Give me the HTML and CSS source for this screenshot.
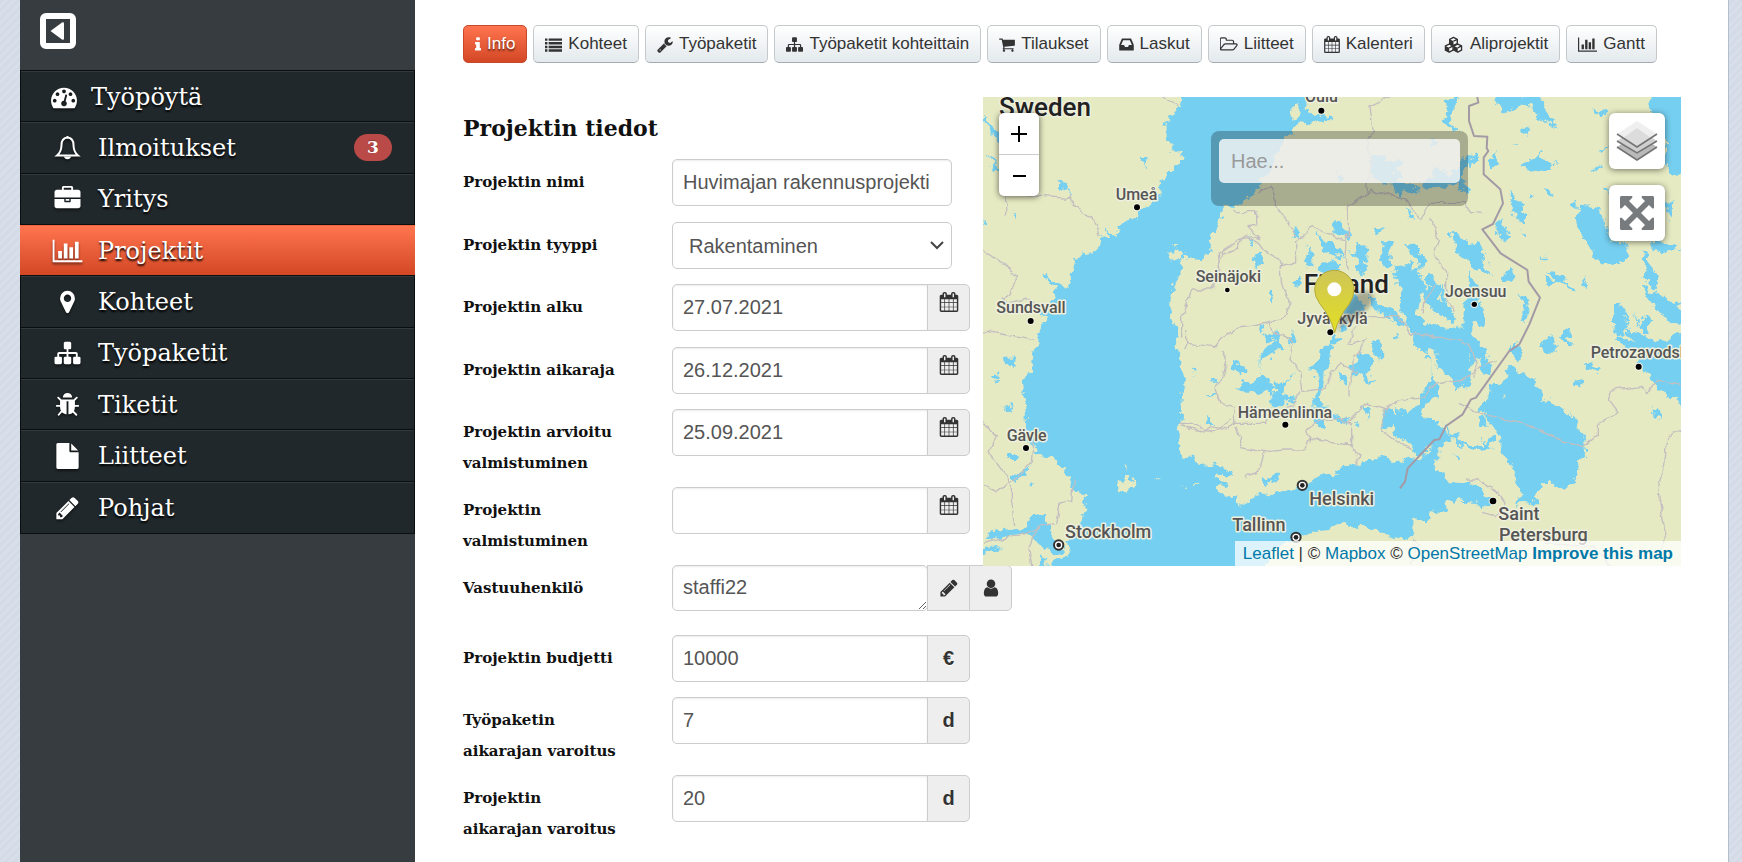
FILE: index.html
```html
<!DOCTYPE html>
<html lang="fi">
<head>
<meta charset="utf-8">
<title>Projektin tiedot</title>
<link rel="stylesheet" href="styles.css">
</head>
<body>
<svg class="sprite" aria-hidden="true">
  <symbol id="i-info" viewBox="576 0 640 1792"><path d="M1216 1344v128q0 26-19 45t-45 19h-512q-26 0-45-19t-19-45v-128q0-26 19-45t45-19h64v-384h-64q-26 0-45-19t-19-45v-128q0-26 19-45t45-19h384q26 0 45 19t19 45v576h64q26 0 45 19t19 45zm-128-1152v192q0 26-19 45t-45 19h-256q-26 0-45-19t-19-45v-192q0-26 19-45t45-19h256q26 0 45 19t19 45z"/></symbol>
  <symbol id="i-list" viewBox="0 0 1792 1792"><path d="M0 256h256v256H0zM384 256h1408v256H384zM0 640h256v256H0zM384 640h1408v256H384zM0 1024h256v256H0zM384 1024h1408v256H384zM0 1408h256v256H0zM384 1408h1408v256H384z"/></symbol>
  <symbol id="i-wrench" viewBox="64 0 1664 1792"><path d="M448 1472q0-26-19-45t-45-19-45 19-19 45 19 45 45 19 45-19 19-45zm644-420l-682 682q-37 37-90 37-52 0-91-37l-106-108q-38-36-38-90 0-53 38-91l681-681q39 98 114.500 173.500t173.500 114.500zm634-435q0 39-23 106-47 134-164.500 217.500t-258.500 83.500q-185 0-316.500-131.500t-131.500-316.500 131.500-316.500 316.500-131.500q58 0 121.500 16.500t107.500 46.500q16 11 16 28t-16 28l-293 169v224l193 107q5-3 79-48.500t135.500-81 70.500-35.500q15 0 23.500 10t8.500 25z"/></symbol>
  <symbol id="i-sitemap" viewBox="0 0 1792 1792"><path d="M1792 1248v320q0 40-28 68t-68 28h-320q-40 0-68-28t-28-68v-320q0-40 28-68t68-28h96v-192h-512v192h96q40 0 68 28t28 68v320q0 40-28 68t-68 28h-320q-40 0-68-28t-28-68v-320q0-40 28-68t68-28h96v-192h-512v192h96q40 0 68 28t28 68v320q0 40-28 68t-68 28h-320q-40 0-68-28t-28-68v-320q0-40 28-68t68-28h96v-192q0-52 38-90t90-38h512v-192h-96q-40 0-68-28t-28-68v-320q0-40 28-68t68-28h320q40 0 68 28t28 68v320q0 40-28 68t-68 28h-96v192h512q52 0 90 38t38 90v192h96q40 0 68 28t28 68z"/></symbol>
  <symbol id="i-cart" viewBox="64 0 1664 1792"><path d="M704 1536q0 52-38 90t-90 38-90-38-38-90 38-90 90-38 90 38 38 90zm896 0q0 52-38 90t-90 38-90-38-38-90 38-90 90-38 90 38 38 90zm128-1088v512q0 24-16.500 42.500t-40.500 21.500l-1044 122q13 60 13 70 0 16-24 64h920q26 0 45 19t19 45-19 45-45 19h-1024q-26 0-45-19t-19-45q0-11 8-31.500t16-36 21.500-40 15.500-29.500l-177-823h-204q-26 0-45-19t-19-45 19-45 45-19h256q16 0 28.500 6.500t19.500 15.500 13 24.500 8 26 5.500 29.500 4.500 26h1201q26 0 45 19t19 45z"/></symbol>
  <symbol id="i-inbox" viewBox="128 0 1536 1792"><path d="M1151 960h316q-1-3-2.500-8t-2.500-8l-212-496h-708l-212 496q-1 2-2.500 8t-2.500 8h316l95 192h320zm513 30v482q0 26-19 45t-45 19h-1408q-26 0-45-19t-19-45v-482q0-62 25-123l238-552q10-25 36.500-42t52.500-17h832q26 0 52.500 17t36.500 42l238 552q25 61 25 123z"/></symbol>
  <symbol id="i-folder" viewBox="0 0 1856 1792"><path d="M1717 931q0-35-53-35h-1088q-40 0-85.500 21.500t-71.500 52.500l-294 363q-18 24-18 40 0 35 53 35h1088q40 0 86-22t71-53l294-363q18-22 18-39zm-1141-163h768v-160q0-40-28-68t-68-28h-576q-40 0-68-28t-28-68v-64q0-40-28-68t-68-28h-320q-40 0-68 28t-28 68v853l256-315q44-53 116-87.500t140-34.500zm1269 163q0 62-46 120l-295 363q-43 53-116 87.500t-140 34.500h-1088q-92 0-158-66t-66-158v-960q0-92 66-158t158-66h320q92 0 158 66t66 158v32h544q92 0 158 66t66 158v160h192q54 0 99 24.500t67 70.500q15 32 15 68z"/></symbol>
  <symbol id="i-calendar" viewBox="64 0 1664 1792"><path d="M192 1664h288v-288h-288v288zm352 0h320v-288h-320v288zm-352-352h288v-320h-288v320zm352 0h320v-320h-320v320zm-352-384h288v-288h-288v288zm736 736h320v-288h-320v288zm-384-736h320v-288h-320v288zm768 736h288v-288h-288v288zm-384-352h320v-320h-320v320zm-352-864v-288q0-13-9.500-22.500t-22.500-9.500h-64q-13 0-22.500 9.500t-9.500 22.500v288q0 13 9.500 22.500t22.500 9.500h64q13 0 22.500-9.500t9.500-22.500zm736 864h288v-320h-288v320zm-384-384h320v-288h-320v288zm384 0h288v-288h-288v288zm32-480v-288q0-13-9.500-22.500t-22.500-9.500h-64q-13 0-22.500 9.500t-9.500 22.500v288q0 13 9.500 22.500t22.500 9.500h64q13 0 22.500-9.500t9.500-22.500zm384-64v1280q0 52-38 90t-90 38h-1408q-52 0-90-38t-38-90v-1280q0-52 38-90t90-38h128v-96q0-66 47-113t113-47h64q66 0 113 47t47 113v96h384v-96q0-66 47-113t113-47h64q66 0 113 47t47 113v96h128q52 0 90 38t38 90z"/></symbol>
  <symbol id="i-cubes" viewBox="0 0 40 36"><g fill="#fff" stroke="currentColor" stroke-width="3" stroke-linejoin="round"><path d="M20 3l8 4v9l-8 4-8-4V7z"/><path d="M11 17l8 4v9l-8 4-8-4v-9z"/><path d="M29 17l8 4v9l-8 4-8-4v-9z"/></g><path d="M12 7l8 4v9l-8-4zM3 21l8 4v9l-8-4zM21 21l8 4v9l-8-4z"/><path d="M20 11l8-4M11 25l8-4M29 25l8-4" stroke="currentColor" stroke-width="3" fill="none"/></symbol>
  <symbol id="i-chart" viewBox="0 0 2048 1792"><path d="M640 896v512h-256v-512h256zm384-512v1024h-256v-1024h256zm1024 1152v128h-2048v-1536h128v1408h1920zm-640-896v768h-256v-768h256zm384-384v1152h-256v-1152h256z"/></symbol>
  <symbol id="i-gauge" viewBox="0 0 1792 1792"><path d="M384 1152q0-53-37.500-90.500t-90.500-37.500-90.500 37.500-37.500 90.500 37.500 90.500 90.500 37.500 90.500-37.500 37.500-90.500zm192-448q0-53-37.500-90.500t-90.500-37.500-90.500 37.500-37.500 90.500 37.500 90.500 90.500 37.500 90.500-37.500 37.500-90.500zm428 481l101-382q6-26-7.500-48.500t-38.500-29.500-48 6.500-30 39.500l-101 382q-60 5-107 43.500t-63 98.500q-20 77 20 146t117 89 146-20 89-117q16-60-6-117t-72-91zm660-33q0-53-37.500-90.500t-90.500-37.500-90.500 37.500-37.500 90.500 37.500 90.500 90.500 37.500 90.500-37.500 37.500-90.500zm-640-640q0-53-37.500-90.500t-90.500-37.500-90.500 37.500-37.500 90.500 37.500 90.500 90.500 37.500 90.500-37.500 37.500-90.500zm448 192q0-53-37.500-90.500t-90.500-37.500-90.500 37.500-37.500 90.500 37.500 90.500 90.500 37.500 90.500-37.500 37.500-90.500zm320 448q0 261-141 483-19 29-54 29h-1402q-35 0-54-29-141-221-141-483 0-182 71-348t191-286 286-191 348-71 348 71 286 191 191 286 71 348z"/></symbol>
  <symbol id="i-bell" viewBox="0 0 26 26"><path d="M13 2.500C8.500 3 7 6.500 7 10c0 5-1.500 8-4.500 10.500h21C20.500 18 19 15 19 10c0-3.500-1.500-7-6-7.500z" fill="none" stroke="currentColor" stroke-width="2"/><path d="M11.500 2.500a1.500 1.500 0 013 0zM9.500 21.500a3.600 3.600 0 007 0z"/></symbol>
  <symbol id="i-briefcase" viewBox="0 0 1792 1792"><path d="M640 256h512v-128h-512v128zm1152 640v480q0 66-47 113t-113 47h-1472q-66 0-113-47t-47-113v-480h672v160q0 26 19 45t45 19h320q26 0 45-19t19-45v-160h672zm-768 0v128h-256v-128h256zm768-480v384h-1792v-384q0-66 47-113t113-47h352v-160q0-40 28-68t68-28h576q40 0 68 28t28 68v160h352q66 0 113 47t47 113z"/></symbol>
  <symbol id="i-marker" viewBox="0 0 1792 1792"><path d="M1152 640q0-106-75-181t-181-75-181 75-75 181 75 181 181 75 181-75 75-181zm256 0q0 109-33 179l-364 774q-16 33-47.500 52t-67.500 19-67.500-19-46.500-52l-365-774q-33-70-33-179 0-212 150-362t362-150 362 150 150 362z"/></symbol>
  <symbol id="i-bug" viewBox="0 0 1792 1792"><path d="M1696 960q0 26-19 45t-45 19h-224q0 171-67 290l208 209q19 19 19 45t-19 45q-18 19-45 19t-45-19l-198-197q-5 5-15 13t-42 28.500-65 36.500-82 29-97 13v-896h-128v896q-51 0-101.500-13.500t-87-33-66-39-43.500-32.500l-15-14-183 207q-20 21-48 21-24 0-43-16-19-18-20.500-44.500t15.500-46.500l202-227q-58-114-58-274h-224q-26 0-45-19t-19-45 19-45 45-19h224v-294l-173-173q-19-19-19-45t19-45 45-19 45 19l173 173h844l173-173q19-19 45-19t45 19 19 45-19 45l-173 173v294h224q26 0 45 19t19 45zm-480-576h-640q0-133 93.500-226.500t226.500-93.500 226.500 93.500 93.500 226.500z"/></symbol>
  <symbol id="i-file" viewBox="0 0 1792 1792"><path d="M1152 512v-472q22 14 36 28l408 408q14 14 28 36h-472zm-128 32q0 40 28 68t68 28h544v1056q0 40-28 68t-68 28h-1344q-40 0-68-28t-28-68v-1600q0-40 28-68t68-28h800v544z"/></symbol>
  <symbol id="i-pencil" viewBox="0 0 1792 1792"><path d="M491 1536l91-91-235-235-91 91v107h128v128h107zm523-928q0-22-22-22-10 0-17 7l-542 542q-7 7-7 17 0 22 22 22 10 0 17-7l542-542q7-7 7-17zm-54-192l416 416-832 832h-416v-416zm683 96q0 53-37 90l-166 166-416-416 166-165q36-38 90-38 53 0 91 38l235 234q37 39 37 91z"/></symbol>
  <symbol id="i-user" viewBox="0 0 1792 1792"><path d="M1536 1399q0 109-62.500 187t-150.500 78h-854q-88 0-150.500-78t-62.500-187q0-85 8.500-160.500t31.500-152 58.500-131 94-89 134.500-34.500q131 128 313 128t313-128q76 0 134.500 34.500t94 89 58.500 131 31.500 152 8.500 160.500zm-256-887q0 159-112.500 271.500t-271.500 112.500-271.500-112.500-112.500-271.500 112.500-271.500 271.500-112.500 271.500 112.500 112.500 271.500z"/></symbol>
</svg>

<div class="page">
  <aside class="sidebar">
    <div class="sidebar-top">
      <button class="collapse" type="button" aria-label="Piilota valikko"><svg viewBox="0 0 36 36"><rect x="3" y="3" width="30" height="30" rx="3" fill="none" stroke="currentColor" stroke-width="6"/><path d="M10.500 18L22 9.500q2-1 2 1v15q0 2-2 1z"/></svg></button>
    </div>
    <nav class="menu">
      <a class="menu-item menu-first" href="#"><svg class="menu-icon"><use href="#i-gauge"/></svg><span>Työpöytä</span></a>
      <a class="menu-item" href="#"><svg class="menu-icon"><use href="#i-bell"/></svg><span>Ilmoitukset</span><span class="badge">3</span></a>
      <a class="menu-item" href="#"><svg class="menu-icon"><use href="#i-briefcase"/></svg><span>Yritys</span></a>
      <a class="menu-item active" href="#"><svg class="menu-icon"><use href="#i-chart"/></svg><span>Projektit</span></a>
      <a class="menu-item" href="#"><svg class="menu-icon"><use href="#i-marker"/></svg><span>Kohteet</span></a>
      <a class="menu-item" href="#"><svg class="menu-icon"><use href="#i-sitemap"/></svg><span>Työpaketit</span></a>
      <a class="menu-item" href="#"><svg class="menu-icon"><use href="#i-bug"/></svg><span>Tiketit</span></a>
      <a class="menu-item" href="#"><svg class="menu-icon"><use href="#i-file"/></svg><span>Liitteet</span></a>
      <a class="menu-item" href="#"><svg class="menu-icon"><use href="#i-pencil"/></svg><span>Pohjat</span></a>
    </nav>
  </aside>

  <main class="content">
    <nav class="tabs">
      <a class="tab current" href="#"><svg class="tab-icon w6"><use href="#i-info"/></svg>Info</a>
      <a class="tab" href="#"><svg class="tab-icon w17"><use href="#i-list"/></svg>Kohteet</a>
      <a class="tab" href="#"><svg class="tab-icon w16"><use href="#i-wrench"/></svg>Työpaketit</a>
      <a class="tab" href="#"><svg class="tab-icon w17"><use href="#i-sitemap"/></svg>Työpaketit kohteittain</a>
      <a class="tab" href="#"><svg class="tab-icon w16"><use href="#i-cart"/></svg>Tilaukset</a>
      <a class="tab" href="#"><svg class="tab-icon w15"><use href="#i-inbox"/></svg>Laskut</a>
      <a class="tab" href="#"><svg class="tab-icon w18"><use href="#i-folder"/></svg>Liitteet</a>
      <a class="tab" href="#"><svg class="tab-icon w16"><use href="#i-calendar"/></svg>Kalenteri</a>
      <a class="tab" href="#"><svg class="tab-icon w21"><use href="#i-cubes"/></svg>Aliprojektit</a>
      <a class="tab" href="#"><svg class="tab-icon w19"><use href="#i-chart"/></svg>Gantt</a>
    </nav>

    <div class="columns">
      <form class="details">
        <h1 class="title">Projektin tiedot</h1>
        <div class="row spaced"><label class="label" for="nimi">Projektin nimi</label><div class="control"><input class="field wide" id="nimi" type="text" value="Huvimajan rakennusprojekti"></div></div>
        <div class="row"><label class="label" for="tyyppi">Projektin tyyppi</label><div class="control"><span class="select-wrap"><select class="field wide select" id="tyyppi"><option>Rakentaminen</option></select><svg class="chevron" viewBox="0 0 14 9"><path d="M1 1l6 6 6-6" fill="none" stroke="currentColor" stroke-width="2"/></svg></span></div></div>
        <div class="row spaced"><label class="label" for="alku">Projektin alku</label><div class="control"><input class="field" id="alku" type="text" value="27.07.2021"><button class="addon date" type="button" aria-label="Valitse alkupäivä"><svg class="addon-icon"><use href="#i-calendar"/></svg></button></div></div>
        <div class="row"><label class="label" for="aikaraja">Projektin aikaraja</label><div class="control"><input class="field" id="aikaraja" type="text" value="26.12.2021"><button class="addon date" type="button" aria-label="Valitse aikaraja"><svg class="addon-icon"><use href="#i-calendar"/></svg></button></div></div>
        <div class="row"><label class="label" for="arvio">Projektin arvioitu valmistuminen</label><div class="control"><input class="field" id="arvio" type="text" value="25.09.2021"><button class="addon date" type="button" aria-label="Valitse arvioitu valmistuminen"><svg class="addon-icon"><use href="#i-calendar"/></svg></button></div></div>
        <div class="row"><label class="label" for="valmis">Projektin valmistuminen</label><div class="control"><input class="field" id="valmis" type="text"><button class="addon date" type="button" aria-label="Valitse valmistuminen"><svg class="addon-icon"><use href="#i-calendar"/></svg></button></div></div>
        <div class="row staff"><label class="label" for="vastuu">Vastuuhenkilö</label><div class="control"><textarea class="field area" id="vastuu" rows="1">staffi22</textarea><button class="addon middle" type="button" aria-label="Muokkaa"><svg class="addon-icon"><use href="#i-pencil"/></svg></button><button class="addon" type="button" aria-label="Valitse henkilö"><svg class="addon-icon"><use href="#i-user"/></svg></button></div></div>
        <div class="row"><label class="label" for="budjetti">Projektin budjetti</label><div class="control"><input class="field" id="budjetti" type="text" value="10000"><span class="addon">€</span></div></div>
        <div class="row"><label class="label" for="tvar">Työpaketin aikarajan varoitus</label><div class="control"><input class="field" id="tvar" type="text" value="7"><span class="addon">d</span></div></div>
        <div class="row"><label class="label" for="pvar">Projektin aikarajan varoitus</label><div class="control"><input class="field" id="pvar" type="text" value="20"><span class="addon">d</span></div></div>
      </form>

      <section class="map" aria-label="Kartta">
        <svg class="map-canvas" viewBox="9 21 2094 1407" preserveAspectRatio="xMinYMin slice">
          <defs>
            <filter id="coast" x="0" y="0" width="2112" height="1440" filterUnits="userSpaceOnUse"><feTurbulence type="fractalNoise" baseFrequency=".04" numOctaves="4" seed="4"/><feDisplacementMap in="SourceGraphic" scale="36" xChannelSelector="R" yChannelSelector="G"/></filter>
            <filter id="wobble" x="0" y="0" width="2112" height="1440" filterUnits="userSpaceOnUse"><feTurbulence type="fractalNoise" baseFrequency=".03" numOctaves="2" seed="9"/><feDisplacementMap in="SourceGraphic" scale="22" xChannelSelector="R" yChannelSelector="G"/></filter>
            <filter id="soft"><feGaussianBlur stdDeviation="7"/></filter>
            <linearGradient id="pin" x1="0" y1="0" x2="0" y2="1"><stop offset="0" stop-color="#cfc558"/><stop offset="1" stop-color="#e2e022"/></linearGradient>
          </defs>
          <rect class="land" width="2112" height="1440"/>
          <g class="water" filter="url(#coast)">
            <path d="M606 0L600 50 575 75 570 97 548 100 566 112 562 140 572 160 578 180 598 185 605 210 585 225 560 255 545 275 540 310 520 340 500 350 478 370 465 385 445 395 420 410 408 440 395 435 382 415 378 435 365 432 362 462 340 490 325 495 305 490 300 505 282 512 285 535 268 550 270 575 250 590 225 590 215 565 197 545 205 575 220 595 228 625 215 640 190 650 180 665 198 680 176 712 185 730 172 755 160 790 155 840 128 865 130 895 135 930 138 1010 140 1055 155 1065 162 1085 180 1090 195 1110 215 1098 228 1105 245 1135 265 1160 275 1185 290 1200 310 1210 320 1240 322 1260 305 1280 300 1310 275 1340 255 1360 270 1380 265 1400 215 1420 205 1460H840L885 1370 905 1360 935 1355 970 1335 1000 1325 1050 1312 1095 1300 1130 1310 1170 1315 1200 1328 1280 1350 1300 1330 1300 1275 1320 1290 1340 1290 1350 1260 1370 1265 1395 1262 1405 1232 1440 1230 1480 1240 1510 1255 1540 1240 1515 1210 1495 1185 1455 1183 1410 1180 1390 1150 1355 1125 1375 1115 1375 1060 1350 1080 1320 1105 1280 1100 1265 1120 1235 1110 1205 1098 1150 1115 1100 1130 1050 1158 1035 1148 1010 1160 985 1178 945 1198 900 1206 870 1215 830 1220 800 1232 780 1250 765 1225 740 1215 710 1210 715 1190 740 1180 700 1165 765 1150 725 1130 690 1122 660 1125 640 1100 615 1100 595 1070 592 1035 600 1000 605 960 605 905 615 872 605 830 600 800 585 778 595 720 575 700 568 670 572 630 580 580 600 555 605 525 615 498 660 510 690 480 685 445 705 425 715 400 720 370 735 350 770 350 800 325 830 300 840 280 880 220 915 150 940 112 990 93 1010 100 1025 92 1058 90 1040 70 1000 75 975 50 980 0z"/>
            <path d="M1590 830l35 20 30 15 30 35 5 25 50 25 45 35 5 25 20 30 12 40-7 25-25 10 5 35-10 25-35 20-35-17-25 2-20 40 5 20-50 0-15 10 12-40-17-55-10-35-30-30-5-50-20-30-25-30-20-25 30-30 5-40 30 0z"/>
            <path d="M2005 0h120v252l-55 5-15-35V115l-35-30z"/>
            <path d="M1985 590l50 20 90 60v40l-50-10-60-60zM1880 730l40 40-10-40 50 30-20-40 60 20 30 20 100-40v240l-60-40-40-25-20-35-20-20-15-30 25-10-30-20-30 10zM1905 645l20-15 5 30 20 50-15 20-35 0zM1960 660l20 40 20-30 10 60-25 0z"/>
            <path d="M1545 415l25 10 15 15-5 15-20-10zM1590 310l20 5-5 20 30 5-15 20 25 15-5 30-25-20-15-20-5-30zM1380 95l25-30-5-35 30-10-10 50-15 30 40 30-30-10zM1540 20h140l10 30 40 60-50-20-20-40-40-10-40 30-20-20zM1530 200l20-15-5 20 10 20-20 5zM1475 195l20-10-5 20-25 30-5-20zM1615 225l30-5 30-30 10 20 40 10-10 20-80-5zM1620 130l10-20 20 0-10 30zM1595 160h20v8zM1835 55l60 20-40 0zM1860 175l20 0-10 15zM1830 230l30 0-5 15zM1690 290l15 5 15 25-20-10zM1645 305l15 10-15 5z"/>
            <path d="M1350 215l10 20 50 20 30-30 10-30 15 25-25 40 25 10-20 10 30 20-20 5-30-20-100 10 0-20 40-20zM1350 150l18 5-15 20z"/>
            <path d="M1165 210q30-30 55 0l50 0-30 30 30 20-20 20 50 5 20 20-50-5-10 20-30-40-40-10-20-25zM1060 245l30 20-10 10zM1280 355l30 35-20-5z"/>
            <g transform="translate(600 300)">
              <path d="M338 112l28 15-10 15-18-12zM455 105l25-15 8 25 25 15-5 15-55-20zM405 120l20 25 35 15 30 45-30-10-40-30zM380 160l20 40 0 30-30-10 12-15zM205 145l15 5-10 15zM222 200l20-10 5 30-20 10zM268 300l8 0 8 40-12-12zM340 270l15 0 5 20-15 0zM578 110l15 0 10 5 8-5-5 15-20 5zM610 155l25 5-8 30 8 40-20 5-12-30zM525 155l35 15-5 50-5 40-20-20 5-30-28-30 30 8zM680 150l25 20 35 40-15 20-30-35zM420 215l25 8 20-18 10 20 15 0-10 20-60 0z"/>
              <path d="M810 122l20 5 30 30 30-5 20 30 5 30 20 50-30-30-20 5-40-30-20-40zM965 260l30-30 5 30-10 20-20-5zM945 95l30 10 8 25-30-10zM990 30l15 15 15 0 15 50-25-5-15-35zM1025 125l18 0-5 15-12-5zM1080 200l20 0-8 10zM1100 245l40 5 20 40-30-20zM1015 315l25 5 5 10-8 70-10-20 8-30zM990 460l30 5 8 30-15 15-18-25zM1080 465l15 5-5 12z"/>
              <path d="M640 230l40-5 10-10 10 20 25-10-5 35 20 25 0 30-20-5-10 60 25 25-10 50-30-10-20-60-10-30-10-60zM735 255l25-10 10 40 15 20-15 20 30 30 25 30-5 12-50-30-30-30-8-30 15-10zM790 285l10 60 15 20-15-5-22-40zM570 315l20 20 30 20 30 10 25 30 5 15-30-10-35-25-45-30z"/>
              <path d="M490 320l40-10 15 30 15 10-25 40-25 10-20 30-15-10 20-40zM860 240l12 20 30 30 15 30-25 10 20 40-5 40-30-20 0 40 20 30 20 10 10 50 12 10-8 35-25-20-5-40-25 25-10-40-25 0-10-60-20-20 40 10 0-80 18-10z"/>
              <path d="M690 415l30-5 50-10 10 20 40-5 30 20 10 50 15 40-5 50-40 30-20-40-35-30-10-60-20 0-10 25 20 20 10 60 15 20 0 20-40 20-20 30 20 20 40 0-10 20 50 25-30 30-45 10-20 20-25-10-10-30-50-20 0-20-30-10 5-50 30 20 0-20 30 0 5 20 40-30 0-30 20-20 20-40-10-60-20-10-30-15z"/>
              <path d="M460 430l25 20-15 10-15 0-5 60-20 30 0 40-15 20 10 40 20 0 15 20 35 10 10 30-50-30-20 10 0 25-30-10-5-60 0-40 10-20-5-40-20-10 20-10 15-40 25-20 10-10zM540 480l25 10 15 20-5 30-15 10 20 30-25-10-10-20-25 10-10-30 20-20zM580 455l15-5 15 30-2 30-20-15-12-25zM475 540l20 10 10 30-15 0zM635 430l25 8-20 12zM545 650l20 0 2 35zM520 695l25 5-10 8zM645 705l20-10 15 12-15 12-18-5z"/>
              <path d="M232 400l15 10-5 20 30 10 20-20 0 30 25 25-30 0-10 20-30 15-10 45 25 15 30 25-20 20-10-10-30 15-20-15-20 8-20-15 20-20 30-5 20-25 0-60 20-20 20-10-30-20-20-20zM335 425l15 15-15 30-10-20zM155 510l20 15 15 0 10 25-20 0-20-15zM350 545l-40 30-30 10-5 40-8 20 25 10 15-15 40-20-40-5 15-40zM330 625l20 15-10 10-20-5zM95 570l20 0-10 10zM85 612h18v8zM25 530l20 10 5 10-15-5zM75 680l15 5 10 30-20-10z"/>
              <path d="M790 695l20 20 45 50 60 0 40 20-30-8-60 5-45-40zM895 680l20 0 5 30-20 0zM900 740l15 15 30-20 0 20-30 15zM825 795l20 8-5 8zM240 865l40 0 5-20 15 0-10 25-40 12z"/>
            </g>
            <path d="M1595 765l25-5 5 40-20 0zM1680 770l25-30 20 10-10 20 20 0-25 25zM1740 730l25-15 10 20-15 10 20 20-30-5zM1780 880l30-10-5 20-20 5zM1810 815l25 10 25 10-5 12-30-12zM2020 955l20 0 5 35-20-5zM1695 560l30 15 0-20 40 30 20 0 5 25-40-30-50 0zM1810 550l15 35-10 10zM1800 345l60 10 5 40 20 10 0 50 50 5 10 35-40 30-50-10-25-15 5-30-20-20-20-40-5-30zM1790 330l0 35-20-20zM1805 440l45 25-20 10zM2050 340l30 0-5 50-20-30zM2020 450l80 20-30 20-50-10zM1985 480l20 20 30 70-10 30-25-20zM1870 285l15 10-5 20z"/>
            <path d="M485 195l12 5-3 30-12-20zM92 360l10 10 15 0-5 12zM235 265l25 20 15 30-30-20zM9 80l50 50 10 30-20-10-40-55zM20 190l40 50 20 0 10 30-20-5-40-50zM9 390l15 18-10 5zM70 800l40 0-5 40-30-20zM30 855l20-5 8 30-20-10zM70 950l30-5 0 20zM82 1095l30 0-5 15-20 0zM95 1165l60-40-10 20-40 35zM150 1185l15-5-5 15zM25 1325l110-15 30-35 30-5-5 20 30 20-10 30 40 40-20 15-60-40-30-20-40 5-80 5zM9 1370l60 0-60 20zM180 1400l15 0 5 30-20 0z"/>
          </g>
          <g class="land" filter="url(#coast)"><path d="M412 1175l20 0 0-20 15 0 5 25 15-10-5 25-20-5-5 20-20-5zM425 1130h8v8zM525 1165h10v8zM565 490l30-10 20 10-10 15-40 0zM575 465l20 0-10 10zM930 60l20-25 15 20-10 35-20-10zM1560 920h14v5zM640 1185l30-5-20 10zM605 1190h12v5zM790 1205l30-10-20 25z"/></g>
          <g class="region" filter="url(#wobble)"><path d="M545 21l50 25M9 480l110 80-60 90M80 380l0-60 40-5 150 10M270 315l5 30 60 35 25 60M60 620l20 20 60-15 40 25M9 722l160 30M9 1000l40 40-20 50 65 90 0 50 10 80M9 1185l40 20 60-40 45-50 5-60M280 1170l-5 60-35 10-10 60-60 10-20 70 10 60M9 1360l130-30 40-20M835 310l35-20 20 60 60 90M760 365l70 0 0 40-25 5 35 40-40-15-30 40-45 15-10 60M755 990l-10 10-50 25-30-10-30-15-40 0M620 720l0 60M1230 21l-60 30 10 80-20 20 15 60-15 100M2100 1020l-40 20-5 80-20 90 20 110-10 90M1455 1170l40 0 60 40 20 30-30 40-40-10M1300 1345l20 20-30 60M1690 1360l150 10 60 60"/>
            <path transform="translate(600 300)" d="M120 250l-5-60 30-20 60-30 30 20 15 20 50 30 5 20 45-15 0-60 50-45 40 20 55 20 10-10 0-90 70-50 100 30 50 60 20-50 110 0 20 35 30-10M500 130l-5 70 10 40M755 85l10 40 10 30-15 40 40 50 0 80 20 40M300 225l5 60 25 50-15 40-40 20-40 10-60 10-50 30-20 25-85-10M5 440l0-60 30-80 60 0 20-50M270 395l10 30 60 30-10 50 30 40 5 60 70-10 20-50 30-20 50 20M120 480l20 30-10 50-25 30 20 50 35 10 5 50-20 20-60-10-20 15-60-20M160 700l100 0 0-30 80-20 20-40M165 710l20 60 70 15 60-5 60 0 10-30 130 15 0-60-40-20M255 785l-10 50-50 30M500 700l60-60 60 20 30-30 80-10 20-30 100-20 50-40 50-20M510 620l0-40 15-80 30-50-50 10 20-40 20-20 10-20 100 0 40 50 90 10 80 20 20 60 0 40M610 660l-5 60 40 30 50 25M390 760l-10-40 40-30 80-10M500 760l40 40-10 30M840 640l60 30 130 30 110 50 70 20 45-40 0-30 60-30-30-40 10-30 90-10 15 20 30-40 60 10 30 15M730 370l0-30 40-60"/></g>
          <path class="frontier" d="M1490 10l5 28-28 10 0 45 15 45 40 2-2 35 5 8-14 20 0 50 50 45 8 42-30 62-32 16 55 72 80 50 4 35 34 48-32 80-30 60-30 20-100 140-15 5-25 45-50 35-20 40-15 2-80 85-8 40-15 20"/>
          <g class="halo">
            <circle cx="471" cy="352" r="9"/><circle cx="152" cy="693" r="9"/><circle cx="742" cy="600" r="7"/><circle cx="1024" cy="62" r="9"/><circle cx="1483" cy="643" r="8"/><circle cx="1051" cy="727" r="9"/><circle cx="1976" cy="830" r="9"/><circle cx="138" cy="1074" r="9"/><circle cx="916" cy="1004" r="9"/><circle cx="1539" cy="1233" r="10"/>
          </g>
          <g class="capital"><circle cx="236" cy="1365" r="14"/><circle cx="967" cy="1186" r="14"/><circle cx="948" cy="1342" r="14"/></g>
          <g class="capital-dot"><circle cx="236" cy="1365" r="7"/><circle cx="967" cy="1186" r="7"/><circle cx="948" cy="1342" r="7"/></g>
          <g class="place country"><text x="57" y="78">Sweden</text><text x="971" y="608">Finland</text></g>
          <g class="place town"><text x="975" y="37">Oulu</text><text x="407" y="331">Umeå</text><text x="49" y="669">Sundsvall</text><text x="647" y="576">Seinäjoki</text><text x="952" y="702">Jyväskylä</text><text x="1395" y="622">Joensuu</text><text x="1832" y="805">Petrozavodsk</text><text x="80" y="1052">Gävle</text><text x="773" y="983">Hämeenlinna</text></g>
          <g class="place city"><text x="255" y="1345">Stockholm</text><text x="988" y="1245">Helsinki</text><text x="757" y="1322">Tallinn</text><text x="1555" y="1290">Saint</text><text x="1557" y="1352">Petersburg</text></g>
          <path d="M1068 724l40-90q40-50 70-20 10 30-40 60z" opacity=".35" filter="url(#soft)"/>
          <path d="M1064 728Q1052 680 1020 642 1004 620 1004 600A59 59 0 011122 600Q1122 620 1108 642 1076 680 1064 728z" fill="url(#pin)" stroke="#b5aa3c" stroke-width="3"/>
          <circle cx="1063" cy="598" r="21" fill="#fff"/>
        </svg>
        <div class="zoom"><button type="button" aria-label="Lähennä"><svg viewBox="0 0 16 16"><path d="M0 7h7V0h2v7h7v2H9v7H7V9H0z"/></svg></button><button type="button" aria-label="Loitonna"><svg viewBox="0 0 16 16"><path d="M2 7h13v2H2z"/></svg></button></div>
        <div class="search"><input type="text" placeholder="Hae..." aria-label="Hae"></div>
        <div class="tools">
          <button type="button" aria-label="Karttatasot"><svg viewBox="0 0 42 42"><path d="M1 27L21 14l20 13-20 13z" fill="#b9b9b9"/><path d="M1 27l20 13 20-13" fill="none" stroke="#747474" stroke-width="1.500"/><path d="M1 21L21 8l20 13-20 12z" fill="#cfcfcf"/><path d="M1 21l20 12 20-12" fill="none" stroke="#747474" stroke-width="1.500"/><path d="M1 14L21 1l20 13-20 13z" fill="#efefef"/><path d="M21 8l14 10-14 9-14-9z" fill="#dcdcdc"/><path d="M1 14l20 13 20-13" fill="none" stroke="#747474" stroke-width="1.500"/></svg></button>
          <button type="button" aria-label="Koko näyttö"><svg class="expand" viewBox="0 0 34 34"><path d="M1 0h11q1 1 0 2L9 5l8 8 8-8-3-3q-1-1 0-2h11l1 1v11q-1 1-2 0l-3-3-8 8 8 8 3-3q1-1 2 0v11l-1 1H22q-1-1 0-2l3-3-8-8-8 8 3 3q1 1 0 2H1l-1-1V22q1-1 2 0l3 3 8-8-8-8-3 3q-1 1-2 0V1z"/></svg></button>
        </div>
        <div class="attribution"><a href="#">Leaflet</a> | © <a href="#">Mapbox</a> © <a href="#">OpenStreetMap</a> <a class="strong" href="#">Improve this map</a></div>
      </section>
    </div>
  </main>
</div>
</body>
</html>
```
FILE: styles.css
```css
* { box-sizing: border-box; }

body {
  margin: 0;
  font-family: "Liberation Sans", Arial, sans-serif;
  color: #333;
  background: repeating-linear-gradient(135deg, #d3dbe7 0 3px, #d8dfea 3px 6px);
}

svg { fill: currentColor; display: block; }
a { text-decoration: none; }
button { font: inherit; cursor: pointer; }
.sprite { position: absolute; width: 0; height: 0; }

.page {
  display: flex;
  min-height: 100vh;
  margin: 0 13px 0 20px;
  background: #fff;
  border-right: 1px solid #b3becb;
}

/* Sidebar */
.sidebar {
  flex: 0 0 395px;
  background: #373c40;
  color: #fff;
  font-family: "DejaVu Serif", serif;
}
.sidebar-top { height: 70px; padding: 13px 20px; }
.collapse { width: 36px; height: 36px; padding: 0; border: 0; background: none; color: #fff; }
.menu {
  display: grid;
  grid-auto-rows: 1fr;
  height: 464px;
  border: 1px solid #0b0e0f;
}
.menu-item {
  display: flex;
  align-items: center;
  gap: 14px;
  padding: 0 22px 0 30px;
  background: #21282b;
  border-top: 1px solid #333a3d;
  border-bottom: 1px solid #0b0e0f;
  color: #fff;
  font-size: 24px;
  text-shadow: 0 2px 2px #000;
}
.menu-item:last-child { border-bottom: 0; }
.menu-icon { width: 33px; height: 26px; filter: drop-shadow(0 2px 1px rgba(0, 0, 0, .5)); }
.menu-first .menu-icon { width: 26px; }
.active {
  margin: 0 -1px;
  padding-left: 31px;
  background: linear-gradient(#ff754f, #d34725);
  border-top-color: #f0663f;
}
.badge {
  margin-left: auto;
  width: 38px;
  border-radius: 14px;
  background: #b94a48;
  font: bold 17px/27px "DejaVu Serif", serif;
  text-align: center;
  text-shadow: 0 -1px 0 rgba(0, 0, 0, .25);
}

/* Tabs */
.content { flex: 1; min-width: 0; padding: 25px 47px 0 48px; }
.tabs { display: flex; flex-wrap: wrap; gap: 6px; margin-bottom: 34px; }
.tab {
  display: flex;
  align-items: center;
  gap: 6px;
  height: 38px;
  padding: 0 11px;
  border: 1px solid #c5c9cc;
  border-bottom-color: #a4abb0;
  border-radius: 5px;
  background: linear-gradient(#fff, #e3e9ed);
  color: #333;
  font-size: 17px;
  white-space: nowrap;
}
.current {
  border-color: #c9482a;
  background: linear-gradient(#ff754f, #d34725);
  color: #fff;
  text-shadow: 0 2px 2px rgba(0, 0, 0, .6);
}
.tab-icon { height: 17px; }
.w6 { width: 6px; }
.w15 { width: 15px; }
.w16 { width: 16px; }
.w17 { width: 17px; }
.w18 { width: 18px; }
.w19 { width: 19px; }
.w21 { width: 21px; }

/* Form */
.columns { display: flex; align-items: flex-start; }
.details { flex: 0 0 520px; min-width: 0; }
.title {
  margin: 0;
  padding-top: 14px;
  height: 62px;
  color: #111;
  font: bold 22px/34px "DejaVu Serif", serif;
}
.row { display: flex; align-items: flex-start; }
.label {
  flex: 0 0 209px;
  padding: 8px 48px 8px 0;
  color: #111;
  font: bold 15px/31px "DejaVu Serif", serif;
}
.control { display: flex; padding-bottom: 15px; }
.spaced .control { padding-bottom: 16px; }
.staff .control { padding-bottom: 24px; }
.field {
  width: 256px;
  height: 47px;
  padding: 0 10px;
  border: 1px solid #ccc;
  border-radius: 5px 0 0 5px;
  background: #fff;
  color: #555;
  font: 20px "Liberation Sans", Arial, sans-serif;
  box-shadow: inset 0 1px 2px rgba(0, 0, 0, .08);
}
.wide { width: 280px; border-radius: 5px; }
.select-wrap { position: relative; }
.select { padding: 0 28px 0 16px; appearance: none; box-shadow: none; }
.chevron { position: absolute; top: 19px; right: 8px; width: 14px; height: 9px; color: #444; pointer-events: none; }
.area { height: 46px; padding: 7px 10px; line-height: 28px; border-radius: 5px; overflow: hidden; }
.addon {
  display: flex;
  align-items: center;
  justify-content: center;
  width: 43px;
  margin-left: -1px;
  padding: 0;
  border: 1px solid #ccc;
  border-radius: 0 5px 5px 0;
  background: #eee;
  color: #333;
  font-size: 20px;
  font-weight: bold;
  text-shadow: 0 1px 0 #fff;
}
.middle { border-radius: 0; }
.date { align-items: flex-start; padding-top: 7px; }
.addon-icon { width: 20px; height: 20px; }

/* Map */
.map { position: relative; flex: 1; min-width: 0; height: 469px; overflow: hidden; }
.map-canvas { width: 100%; height: 100%; }
.land { fill: #e5eac2; }
.water { fill: #75cff0; }
.region { fill: none; stroke: #c3bfc0; stroke-width: 4; }
.frontier { fill: none; stroke: #a39aa6; stroke-width: 6; stroke-linejoin: round; }
.halo { fill: #000; stroke: #f4f4e6; stroke-width: 6; paint-order: stroke; }
.capital { fill: #fff; stroke: #333; stroke-width: 6; }
.capital-dot { fill: #222; }
.place { font-family: Roboto, sans-serif; stroke: #eef0de; stroke-width: 9; stroke-linejoin: round; paint-order: stroke; }
.country { font-size: 78px; font-weight: 500; fill: #222; }
.town { font-size: 48px; fill: #555; font-weight: 500; }
.city { font-size: 54px; fill: #555; font-weight: 500; }

.zoom {
  position: absolute;
  top: 16px;
  left: 16px;
  width: 40px;
  border-radius: 5px;
  background: #fff;
  box-shadow: 0 1px 6px rgba(0, 0, 0, .6);
}
.zoom button {
  display: grid;
  place-items: center;
  width: 40px;
  height: 41px;
  padding: 0;
  border: 0;
  background: none;
  color: #000;
}
.zoom button + button { height: 42px; border-top: 1px solid #ccc; }
.zoom svg { width: 16px; height: 16px; }
.search {
  position: absolute;
  top: 34px;
  left: 228px;
  width: 257px;
  height: 75px;
  padding: 8px;
  border-radius: 8px;
  background: rgba(0, 0, 0, .26);
}
.search input {
  width: 100%;
  height: 44px;
  padding: 0 12px;
  border: 0;
  border-radius: 5px;
  background: rgba(255, 255, 255, .78);
  font: 20px "Liberation Sans", Arial, sans-serif;
}
.search input::placeholder { color: #999; }
.tools { position: absolute; top: 16px; right: 16px; display: grid; gap: 16px; }
.tools button {
  display: grid;
  place-items: center;
  width: 56px;
  height: 56px;
  padding: 0;
  border: 0;
  border-radius: 6px;
  background: #fff;
  color: #777b7e;
  box-shadow: 0 1px 6px rgba(0, 0, 0, .5);
}
.tools svg { width: 42px; height: 42px; }
.tools .expand { width: 34px; height: 34px; }
.attribution {
  position: absolute;
  right: 0;
  bottom: 0;
  padding: 0 8px;
  background: rgba(255, 255, 255, .75);
  color: #333;
  font-size: 17px;
  line-height: 25px;
  white-space: nowrap;
}
.attribution a { color: #0078a8; }
.strong { font-weight: bold; }
```
